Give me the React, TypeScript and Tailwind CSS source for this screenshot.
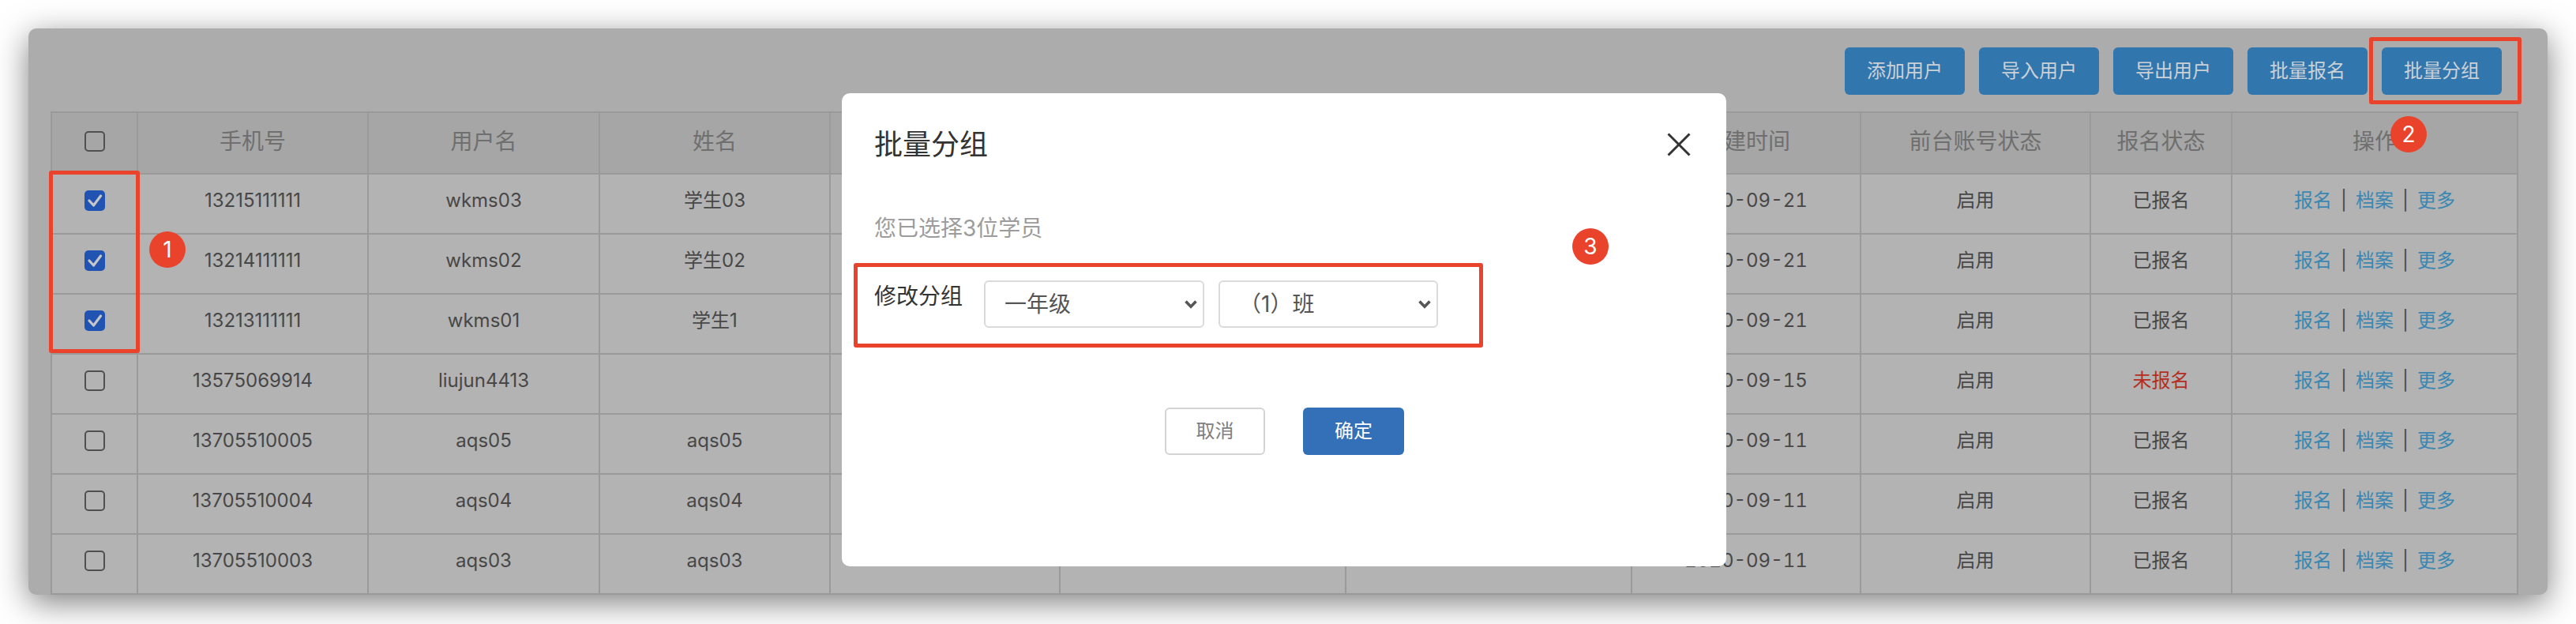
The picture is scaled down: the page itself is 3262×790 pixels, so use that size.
import React from "react";

type Row = { phone: string; user: string; name: string; date: string; status: string; checked: boolean };

const rows: Row[] = [
  { phone: "13215111111", user: "wkms03", name: "学生03", date: "2020-09-21", status: "已报名", checked: true },
  { phone: "13214111111", user: "wkms02", name: "学生02", date: "2020-09-21", status: "已报名", checked: true },
  { phone: "13213111111", user: "wkms01", name: "学生1", date: "2020-09-21", status: "已报名", checked: true },
  { phone: "13575069914", user: "liujun4413", name: "", date: "2020-09-15", status: "未报名", checked: false },
  { phone: "13705510005", user: "aqs05", name: "aqs05", date: "2020-09-11", status: "已报名", checked: false },
  { phone: "13705510004", user: "aqs04", name: "aqs04", date: "2020-09-11", status: "已报名", checked: false },
  { phone: "13705510003", user: "aqs03", name: "aqs03", date: "2020-09-11", status: "已报名", checked: false },
];

const headers = ["", "手机号", "用户名", "姓名", "", "", "", "创建时间", "前台账号状态", "报名状态", "操作"];

function Checkbox({ checked }: { checked: boolean }) {
  if (checked) {
    return (
      <div className="flex h-[26px] w-[26px] items-center justify-center rounded-[5px] bg-[#2153b2]">
        <svg width="26" height="26" viewBox="0 0 26 26">
          <polyline points="6,13 11.5,19 20.5,7" fill="none" stroke="#c6c6c6" strokeWidth="3.2" strokeLinecap="round" strokeLinejoin="round" />
        </svg>
      </div>
    );
  }
  return <div className="h-[26px] w-[26px] rounded-[5px] border-2 border-[#505050]" />;
}

function HeadCell({ children }: { children?: React.ReactNode }) {
  return (
    <div className="flex h-[78px] items-center justify-center border-r-2 border-b-2 border-[#9a9a9a] bg-[#a6a6a6] pb-[4px] text-[28px] text-[#6f6f6f]">
      {children}
    </div>
  );
}

function Cell({ children, className = "" }: { children?: React.ReactNode; className?: string }) {
  return (
    <div className={`flex h-[76px] items-center justify-center border-r-2 border-b-2 border-[#9a9a9a] bg-[#b3b3b3] pb-[8px] text-[24px] text-[#474747] ${className}`}>
      {children}
    </div>
  );
}

function ToolButton({ label }: { label: string }) {
  return (
    <div className="flex h-[60px] w-[152px] items-center justify-center rounded-[6px] bg-[#3276ae] text-[24px] text-[#cbd1d6]">
      {label}
    </div>
  );
}

function Chevron() {
  return (
    <svg width="18" height="12" viewBox="0 0 18 12">
      <polyline points="2.5,2.5 9,9.2 15.5,2.5" fill="none" stroke="#555555" strokeWidth="3.6" />
    </svg>
  );
}

function FakeSelect({ value, width }: { value: string; width: string }) {
  return (
    <div className={`flex h-[60px] items-center justify-between rounded-[6px] border-2 border-[#dadada] bg-white pl-[24px] pr-[6px] text-[28px] text-[#555555] ${width}`}>
      <span>{value}</span>
      <Chevron />
    </div>
  );
}

function Badge({ n, className }: { n: string; className: string }) {
  return (
    <div className={`absolute flex h-[46px] w-[46px] items-center justify-center rounded-full bg-[#e9432b] text-[28px] leading-none text-white ${className}`}>
      {n}
    </div>
  );
}

export default function App() {
  return (
    <div className="relative h-[790px] w-[3262px] overflow-hidden bg-white font-['Inter','Noto_Sans_CJK_SC',sans-serif]">
      <div className="pl-[36px] pt-[36px]">
        <div className="h-[717px] w-[3190px] overflow-hidden rounded-[10px] bg-[#acacac] pl-[28px] pt-[24px] shadow-[0_10px_40px_rgba(0,0,0,0.5)]">
          <div className="w-[3125px]">
            <div className="flex justify-end gap-[18px] pr-[21px]">
              <ToolButton label="添加用户" />
              <ToolButton label="导入用户" />
              <ToolButton label="导出用户" />
              <ToolButton label="批量报名" />
              <ToolButton label="批量分组" />
            </div>
            <div className="mt-[21px] grid grid-cols-[109px_292px_293px_292px_291px_362px_362px_290px_291px_179px_362px] border-t-2 border-l-2 border-[#9a9a9a]">
              {headers.map((h, i) => (
                <HeadCell key={`h${i}`}>{i === 0 ? <Checkbox checked={false} /> : h}</HeadCell>
              ))}
              {rows.map((r, ri) => (
                <React.Fragment key={`r${ri}`}>
                  <Cell>
                    <Checkbox checked={r.checked} />
                  </Cell>
                  <Cell>{r.phone}</Cell>
                  <Cell>{r.user}</Cell>
                  <Cell>{r.name}</Cell>
                  <Cell />
                  <Cell />
                  <Cell />
                  <Cell className="tabular-nums">{r.date}</Cell>
                  <Cell>启用</Cell>
                  <Cell className={r.status === "未报名" ? "!text-[#b52d20]" : ""}>{r.status}</Cell>
                  <Cell className="!text-[#3987b2]">
                    <span>报名</span>
                    <span className="mx-[11px] text-[#4a4a4a]">|</span>
                    <span>档案</span>
                    <span className="mx-[11px] text-[#4a4a4a]">|</span>
                    <span>更多</span>
                  </Cell>
                </React.Fragment>
              ))}
            </div>
          </div>
        </div>
      </div>

      {/* Modal */}
      <div className="absolute left-[1066px] top-[118px] h-[599px] w-[1120px] rounded-[10px] bg-white pl-[41px] pr-[45px] pt-[40px]">
        <div className="flex h-[50px] items-center justify-between">
          <div className="text-[36px] leading-[50px] text-[#333333]">批量分组</div>
          <svg width="30" height="30" viewBox="0 0 30 30">
            <line x1="1.5" y1="1.5" x2="28.5" y2="28.5" stroke="#333333" strokeWidth="3" />
            <line x1="28.5" y1="1.5" x2="1.5" y2="28.5" stroke="#333333" strokeWidth="3" />
          </svg>
        </div>
        <div className="mt-[61px] text-[28px] leading-[40px] text-[#9c9c9c]">您已选择3位学员</div>
        <div className="mt-[46px] flex items-start">
          <div className="w-[139px] text-[28px] leading-[40px] text-[#333333]">修改分组</div>
          <FakeSelect value="一年级" width="w-[279px]" />
          <div className="ml-[18px]">
            <FakeSelect value="（1）班" width="w-[278px]" />
          </div>
        </div>
        <div className="mt-[101px] flex gap-[48px] pl-[368px]">
          <div className="flex h-[60px] w-[127px] items-center justify-center rounded-[6px] border-2 border-[#d4d4d4] text-[24px] text-[#808080]">
            取消
          </div>
          <div className="flex h-[60px] w-[128px] items-center justify-center rounded-[6px] bg-[#3370b7] text-[24px] text-white">
            确定
          </div>
        </div>
      </div>

      {/* Annotations */}
      <div className="absolute left-[62px] top-[216px] h-[231px] w-[115px] rounded-[3px] border-[5px] border-[#e9432b]" />
      <Badge n="1" className="left-[189px] top-[293px]" />
      <div className="absolute left-[3000px] top-[47px] h-[85px] w-[193px] rounded-[3px] border-[5px] border-[#e9432b]" />
      <Badge n="2" className="left-[3027px] top-[147px]" />
      <div className="absolute left-[1081px] top-[333px] h-[107px] w-[797px] rounded-[3px] border-[5px] border-[#e9432b]" />
      <Badge n="3" className="left-[1991px] top-[289px]" />
    </div>
  );
}
